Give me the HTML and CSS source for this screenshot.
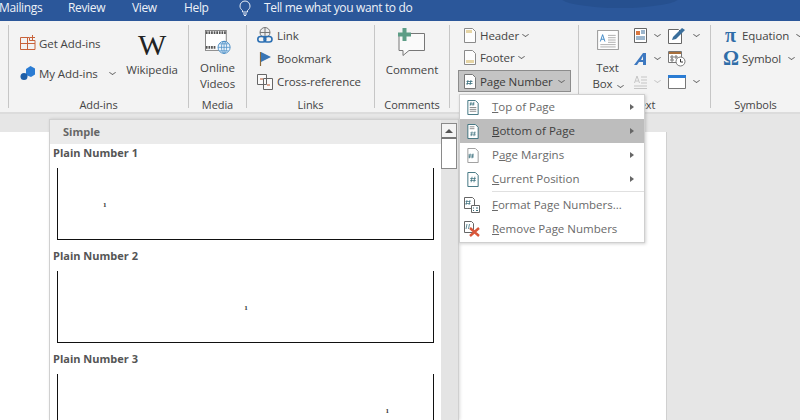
FILE: index.html
```html
<!DOCTYPE html>
<html lang="en">
<head>
<meta charset="utf-8">
<title>Page Number</title>
<link rel="stylesheet" href="styles.css">
</head>
<body>
<header class="titlebar">
  <div class="swoosh"></div>
  <nav class="tabs">
    <span class="tab tab-mailings">Mailings</span>
    <span class="tab tab-review">Review</span>
    <span class="tab tab-view">View</span>
    <span class="tab tab-help">Help</span>
    <svg class="bulb" width="14" height="16" viewBox="0 0 14 16" fill="none" stroke="#e8eef7" stroke-width="1"><path d="M4.5 10.5C3 9.3 2 8 2 6a5 5 0 0 1 10 0c0 2-1 3.3-2.500 4.500V12h-5zM5 14h4M6 15.500h2"/></svg>
    <span class="tab">Tell me what you want to do</span>
  </nav>
</header>

<section class="ribbon">
  <div class="group g-addins">
    <div class="body addins-body">
      <div class="col addins-left">
        <div class="cmd">
          <svg width="16" height="16" viewBox="0 0 16 16" fill="none" stroke="#c8623a"><path d="M.5 2.500h9v3h5.500v9H.5zM.5 8.500H15M7.500 2.500v12M12.500 0v5M10 2.500h5"/></svg>
          <span>Get Add-ins</span>
        </div>
        <div class="cmd">
          <svg width="16" height="16" viewBox="0 0 16 16"><path fill="#2b7cd3" d="M6 4l4.500-3L15 3.500v6L11 12l-5-2z"/><circle cx="4" cy="11.500" r="3.500" fill="#1e5fa8"/></svg>
          <span>My Add-ins</span><i class="chev chev-add"></i>
        </div>
      </div>
      <div class="col wiki">
        <span class="wiki-w">W</span>
        <span>Wikipedia</span>
      </div>
    </div>
    <div class="label">Add-ins</div>
  </div>

  <div class="group g-media">
    <div class="body big">
      <svg width="30" height="30" viewBox="0 0 30 30" fill="none"><rect x=".5" y=".5" width="24" height="23" fill="#fff" stroke="#777"/><path d="M1 3h23M1 20h12" stroke="#555" stroke-width="3" stroke-dasharray="2 1"/><circle cx="22" cy="20" r="7" fill="#eaf3fb" stroke="#3f87c2"/><path d="M15 20h14M22 13v14M17 16h10M17 24h10" stroke="#3f87c2" stroke-width=".8"/><ellipse cx="22" cy="20" rx="3" ry="7" stroke="#3f87c2" stroke-width=".8"/></svg>
      <span class="big-text media-text">Online<br>Videos</span>
    </div>
    <div class="label">Media</div>
  </div>

  <div class="group g-links">
    <div class="body col links-body">
      <div class="cmd">
        <svg width="16" height="17" viewBox="0 0 16 17" fill="none"><circle cx="8" cy="5.500" r="5" fill="#eee" stroke="#777"/><path d="M3 5.500h10M8 .5v10" stroke="#777"/><rect x=".8" y="9.500" width="8" height="5.500" rx="2.700" stroke="#2b6fb3" stroke-width="1.600"/><rect x="7" y="9.500" width="8" height="5.500" rx="2.700" stroke="#2b6fb3" stroke-width="1.600"/></svg>
        <span>Link</span>
      </div>
      <div class="cmd">
        <svg width="16" height="16" viewBox="0 0 16 16"><path d="M3.500 1v14" stroke="#8a6a3c" stroke-width="1.200"/><path d="M4 1l10 5-10 5z" fill="#3a76b5"/></svg>
        <span>Bookmark</span>
      </div>
      <div class="cmd">
        <svg width="16" height="17" viewBox="0 0 16 17" fill="#fafafa" stroke="#666"><path d="M.5 1.500h9v10h-9zM6.500 5.500h9v11h-9z"/><path d="M3 6h3M10 12h3" stroke="#b5552d"/></svg>
        <span>Cross-reference</span>
      </div>
    </div>
    <div class="label">Links</div>
  </div>

  <div class="group g-comments">
    <div class="body big">
      <svg width="32" height="29" viewBox="0 0 32 29" fill="none"><path d="M3 6.500h25.500v17H13l-6 5v-5H3z" transform="translate(0 -1)" fill="#fafafa" stroke="#777"/><path d="M6.500 0h4v4.500H15v4h-4.500V13h-4V8.500H2v-4h4.500z" fill="#5d9d86"/></svg>
      <span class="big-text comment-text">Comment</span>
    </div>
    <div class="label">Comments</div>
  </div>

  <div class="group g-header">
    <div class="body col header-body">
      <div class="cmd">
        <svg width="12" height="15" viewBox="0 0 12 15" fill="#fdfdfd" stroke="#8a8a8a"><path d="M.5.500h8l3 3v11H.5z"/><path d="M2 2h6v3H2z" fill="#e6d5a5" stroke="none"/></svg>
        <span>Header</span><i class="chev"></i>
      </div>
      <div class="cmd">
        <svg width="12" height="15" viewBox="0 0 12 15" fill="#fdfdfd" stroke="#8a8a8a"><path d="M.5.500h8l3 3v11H.5z"/><path d="M2 10h8v3H2z" fill="#e6d5a5" stroke="none"/></svg>
        <span>Footer</span><i class="chev"></i>
      </div>
      <div class="cmd pressed">
        <svg width="12" height="15" viewBox="0 0 12 15" fill="#fdfdfd" stroke="#777"><path d="M.5.500h8l3 3v11H.5z"/><path d="M4 6l-1 5M7 6l-1 5M2.500 7.500h6M2.500 9.500h6" stroke="#3a6f7c" stroke-width=".8" fill="none"/></svg>
        <span>Page Number</span><i class="chev"></i>
      </div>
    </div>
    <div class="label"></div>
  </div>

  <div class="group g-text">
    <div class="body text-body">
      <div class="big textbox">
        <svg width="28" height="26" viewBox="0 0 28 26" fill="#fff" stroke="#777"><path d="M.5.500h27v25H.5z"/><path d="M14 7h10M14 10h10M14 13h10M14 16h10M4 19h20M4 22h20" stroke="#999" fill="none"/><path d="M4 15l3-9 3 9M5 12h4" stroke="#3a86c4" stroke-width="1.200" fill="none"/></svg>
        <span class="big-text">Text<br>Box<i class="chev chev-box"></i></span>
      </div>
      <div class="icon-grid">
        <div class="icon-cell">
          <svg width="13" height="15" viewBox="0 0 13 15" fill="#fff" stroke="#666"><path d="M.5.500h12v14H.5z"/><path d="M2 3h4v4H2z" fill="#d9773f" stroke="none"/><path d="M7 3h4M7 5h4M2 9h9M2 11h9" stroke="#3a6f9c"/></svg><i class="chev"></i>
        </div>
        <div class="icon-cell">
          <svg width="18" height="17" viewBox="0 0 18 17" fill="#fff" stroke="#666"><path d="M.5 2.500h10l3 3v11H.5z"/><path d="M4 13l1-3 9-9 3 2-9 9z" fill="#3a6f9c" stroke="none"/></svg><i class="chev"></i>
        </div>
        <div class="icon-cell">
          <svg width="13" height="14" viewBox="0 0 13 14"><path d="M0 13L9 1h3v12H9v-3H5l-2 3zM9 4L7 8h2z" fill="#3d78c0"/></svg><i class="chev"></i>
        </div>
        <div class="icon-cell">
          <svg width="18" height="17" viewBox="0 0 18 17" fill="#fff" stroke="#777"><path d="M.5 1.500h13v11H.5z"/><path d="M1 2h12v2H1z" fill="#a8703c" stroke="none"/><path d="M3 6h2v2H3zM7 6h2v2H7zM3 9h2v2H3z"/><circle cx="12.500" cy="11.500" r="4.500"/><path d="M12.500 9v3h2.500" stroke="#333"/></svg>
        </div>
        <div class="icon-cell muted-icon">
          <svg width="13" height="15" viewBox="0 0 13 15" fill="none" stroke="#c5c5c5"><path d="M.5 9L3 2l2.500 7M1.500 7h3M7 3h6M7 6h6M7 9h6M0 12h13M0 14.500h13"/></svg><i class="chev chev-off"></i>
        </div>
        <div class="icon-cell">
          <svg width="18" height="14" viewBox="0 0 18 14" fill="#fff" stroke="#777"><path d="M.5.500h17v13H.5z"/><path d="M0 0h18v3H0z" fill="#2b7cd3" stroke="none"/></svg><i class="chev"></i>
        </div>
      </div>
    </div>
    <div class="label"><span class="text-label">Text</span></div>
  </div>

  <div class="group g-symbols">
    <div class="body col symbols-body">
      <div class="cmd sym"><span class="glyph">π</span><span>Equation</span><i class="chev"></i></div>
      <div class="cmd sym"><span class="glyph">Ω</span><span>Symbol</span><i class="chev"></i></div>
    </div>
    <div class="label">Symbols</div>
  </div>
</section>

<main class="docarea">
  <div class="page"></div>
</main>

<aside class="gallery">
  <div class="gallery-main">
    <div class="gallery-head">Simple</div>
    <div class="item">
      <div class="item-name">Plain Number 1</div>
      <div class="preview preview-left"><span class="num">1</span></div>
    </div>
    <div class="item">
      <div class="item-name">Plain Number 2</div>
      <div class="preview preview-center"><span class="num">1</span></div>
    </div>
    <div class="item">
      <div class="item-name">Plain Number 3</div>
      <div class="preview preview-right"><span class="num">1</span></div>
    </div>
  </div>
  <div class="scrollbar">
    <div class="scroll-up"><i class="tri-up"></i></div>
    <div class="scroll-thumb"></div>
  </div>
</aside>

<div class="menu">
  <div class="mi">
    <svg width="14" height="15" viewBox="0 0 14 16" fill="#fff" stroke="#3a6f7c"><path d="M1.500.500h8l3 3v12h-11z"/><path d="M5 2l-1 4M8 2L7 6M3.500 3.500h5M3.500 5h5" stroke-width=".7"/><path d="M3.500 8h7M3.500 10h7M3.500 12h7" stroke="#888"/></svg>
    <span class="mt"><u>T</u>op of Page</span><i class="arrow"></i>
  </div>
  <div class="mi active">
    <svg width="14" height="15" viewBox="0 0 14 16" fill="#fff" stroke="#3a6f7c"><path d="M1.500.500h8l3 3v12h-11z"/><path d="M3.500 3h5M3.500 5h5" stroke="#888"/><path d="M6 8l-1 5M9 8l-1 5M4 9.500h6M4 11.500h6" stroke-width=".7"/></svg>
    <span class="mt"><u>B</u>ottom of Page</span><i class="arrow"></i>
  </div>
  <div class="mi">
    <svg width="14" height="15" viewBox="0 0 14 16" fill="#fff" stroke="#3a6f7c"><path d="M1.500.500h8l3 3v12h-11z" stroke="#999"/><path d="M4 6l-1 5M7 6l-1 5M2 7.500h6M2 9.500h6" stroke-width=".8"/></svg>
    <span class="mt">P<u>a</u>ge Margins</span><i class="arrow"></i>
  </div>
  <div class="mi">
    <svg width="14" height="15" viewBox="0 0 14 16" fill="#fff" stroke="#3a6f7c"><path d="M1.500.500h8l3 3v12h-11z"/><path d="M6 5l-1 6M9 5l-1 6M4 7h6M4 9h6" stroke-width=".8"/></svg>
    <span class="mt"><u>C</u>urrent Position</span><i class="arrow"></i>
  </div>
  <div class="sep"></div>
  <div class="mi">
    <svg class="wide" width="16" height="16" viewBox="0 0 16 16" fill="#fff" stroke="#666"><path d="M.5.500h8l2 2v9H.5z"/><path d="M3 3L2 8M6 3L5 8M1.500 4.500h5M1.500 6.500h5" stroke="#3a6f7c" stroke-width=".7"/><path d="M7.500 8.500h8v7h-8z"/><path d="M9 11h1M12 11h2M9 13.500h1M12 13.500h2" stroke="#3a6f7c"/></svg>
    <span class="mt"><u>F</u>ormat Page Numbers...</span>
  </div>
  <div class="mi">
    <svg class="wide" width="16" height="16" viewBox="0 0 16 16" fill="none"><path d="M.5.500h7l2 2v9H.5z" fill="#fff" stroke="#666"/><path d="M3 3L2 8M5.500 3L4.500 8" stroke="#3a6f7c" stroke-width=".8"/><path d="M6 7l9 8M15 7l-9 8" stroke="#d9573a" stroke-width="2.400"/></svg>
    <span class="mt"><u>R</u>emove Page Numbers</span>
  </div>
</div>
</body>
</html>
```
FILE: styles.css
```css
* { box-sizing: border-box; }
html, body { margin: 0; height: 420px; overflow: hidden; }
body {
  width: 800px;
  position: relative;
  font-family: "Open Sans", "Noto Sans", sans-serif;
  font-size: 11.500px;
  color: #444;
  background: #e6e6e6;
  display: flex;
  flex-direction: column;
}
i { display: inline-block; font-style: normal; }

.titlebar {
  height: 21px;
  flex: none;
  background: #2b579a;
  position: relative;
  overflow: hidden;
}
.swoosh {
  position: absolute;
  left: 560px;
  top: -14px;
  width: 120px;
  height: 22px;
  border-radius: 50%;
  background: #26508f;
}
.tabs {
  position: relative;
  display: flex;
  align-items: center;
  height: 15px;
  margin-left: -1px;
  color: #eef2f8;
  font-size: 12px;
  letter-spacing: -.35px;
}
.tab { white-space: nowrap; }
.tab-mailings { width: 69px; }
.tab-review { width: 64px; }
.tab-view { width: 52px; }
.tab-help { width: 54px; }
.bulb { margin-right: 12px; flex: none; }

.ribbon {
  height: 93px;
  flex: none;
  background: #f3f3f3;
  border-bottom: 2px solid #dcdcdc;
  padding: 4px 0 4px 8px;
  display: flex;
  letter-spacing: -.08px;
}
.group {
  border-left: 1px solid #c6c6c6;
  display: flex;
  flex-direction: column;
  flex: none;
}
.group .body { flex: 1; min-height: 0; }
.label {
  height: 16px;
  line-height: 25px;
  text-align: center;
  font-size: 11px;
  white-space: nowrap;
}
.g-addins { width: 180px; }
.g-media { width: 58px; }
.g-links { width: 128px; }
.g-comments { width: 75px; }
.g-header { width: 129px; }
.g-text { width: 132px; }
.g-symbols { width: 90px; }

.col { display: flex; flex-direction: column; }
.cmd {
  display: flex;
  align-items: center;
  white-space: nowrap;
  gap: 4px;
}
.cmd svg { flex: none; }
.chev {
  width: 5px;
  height: 5px;
  border-right: 1px solid #666;
  border-bottom: 1px solid #666;
  transform: scaleY(.7) rotate(45deg);
  margin: -2px 0 0 4px;
  flex: none;
}

.addins-body { display: flex; }
.addins-left { padding: 10px 0 0 11px; gap: 14px; width: 122px; }
.addins-left .cmd { height: 16px; gap: 3px; }
.chev-add { margin-left: 9px; }
.wiki { align-items: center; width: 60px; margin-left: -9px; padding-top: 6px; }
.wiki-w {
  font-family: "Liberation Serif", serif;
  font-size: 30px;
  line-height: 28px;
  color: #222;
  margin-bottom: 3px;
}

.big {
  display: flex;
  flex-direction: column;
  align-items: center;
  padding-top: 5px;
}
.big-text { text-align: center; line-height: 16px; margin-top: 3px; white-space: nowrap; }
.media-text { margin-top: 4px; }
.comment-text { margin-top: 5px; }
.g-comments .big { padding-top: 3px; }

.links-body { padding: 2px 0 0 10px; gap: 6px; }
.links-body .cmd { height: 17px; }

.header-body { padding: 3px 0 0 8px; gap: 6px; }
.header-body .cmd { height: 17px; padding-left: 6px; }
.header-body .chev { margin-left: 0; }
.header-body .cmd.pressed {
  height: 24px;
  width: 113px;
  margin-top: -2px;
  background: #c4c4c4;
  border: 1px solid #8c8c8c;
  padding-left: 5px;
  padding-top: 1px;
  color: #3a3a3a;
}
.header-body .pressed .chev { margin-left: 2px; }

.text-body { display: flex; }
.textbox { width: 56px; padding: 5px 0 0 1px; }
.textbox .big-text { margin-top: 10px; }
.chev-box { margin-left: 5px; }
.icon-grid {
  display: grid;
  grid-template-columns: 34px 40px;
  grid-auto-rows: 23px;
  align-items: center;
  align-self: flex-start;
  margin: -1px 0 0 -1px;
}
.icon-cell { display: flex; align-items: center; }
.icon-cell .chev { margin-left: 8px; }
.chev-off { border-color: #c5c5c5; }

.symbols-body { padding: 2px 0 0 12px; gap: 6px; }
.sym { height: 17px; gap: 4px; }
.glyph {
  font-family: "Liberation Serif", serif;
  font-size: 20px;
  font-weight: 700;
  line-height: 17px;
  color: #2f6da8;
  width: 15px;
  flex: none;
  text-align: center;
}

.docarea { flex: 1; padding-top: 18px; }
.page { width: 667px; height: 100%; background: #fff; border-right: 1px solid #d0d0d0; }

.gallery {
  position: absolute;
  left: 49px;
  top: 119px;
  width: 410px;
  height: 301px;
  background: #fff;
  border: 1px solid #d0d0d0;
  border-bottom: 0;
  box-shadow: 1px 0 3px rgba(0,0,0,.15);
  display: flex;
  overflow: hidden;
}
.gallery-main { flex: 1; min-width: 0; }
.gallery-head {
  height: 24px;
  line-height: 24px;
  padding-left: 13px;
  background: #ebebeb;
  font-weight: 700;
  font-size: 11px;
  color: #666;
}
.item { height: 103px; padding-left: 3px; }
.item-name {
  height: 24px;
  line-height: 18px;
  font-weight: 700;
  font-size: 11px;
  color: #555;
}
.preview {
  width: 377px;
  height: 72px;
  margin-left: 4px;
  border-left: 1.500px solid #111;
  border-right: 1.500px solid #111;
  border-bottom: 1.500px solid #111;
  display: flex;
  align-items: center;
  padding: 3px 44px 0 45px;
  font-size: 7px;
  font-weight: 700;
  color: #333;
}
.preview-left { justify-content: flex-start; }
.preview-center { justify-content: center; }
.preview-right { justify-content: flex-end; }
.num { font-family: "Liberation Serif", serif; }
.scrollbar {
  width: 17px;
  flex: none;
  background: #e4e4e4;
  padding: 3px 1px 0 0;
  display: flex;
  flex-direction: column;
}
.scroll-up {
  height: 16px;
  background: #f4f4f4;
  border: 1px solid #8a8a8a;
  border-bottom: 2px solid #777;
  display: flex;
  align-items: center;
  justify-content: center;
}
.tri-up {
  width: 0;
  height: 0;
  border-left: 4px solid transparent;
  border-right: 4px solid transparent;
  border-bottom: 4px solid #555;
}
.scroll-thumb {
  height: 30px;
  background: #fff;
  border: 1px solid #8a8a8a;
  border-top: 0;
}

.menu {
  position: absolute;
  left: 459px;
  top: 94px;
  width: 186px;
  height: 149px;
  background: #fff;
  border: 1px solid #cfcfcf;
  box-shadow: 1px 1px 3px rgba(0,0,0,.18);
  color: #6a6a6a;
}
.mi {
  height: 24px;
  display: flex;
  align-items: center;
  padding-left: 6px;
  white-space: nowrap;
}
.mi svg { flex: none; width: 14px; }
.mi svg.wide { width: 16px; margin-left: -2px; }
.mt { margin-left: 12px; flex: 1; padding-bottom: 2px; }
.mi.active { background: #bdbdbd; color: #3f3f3f; }
.arrow {
  width: 0;
  height: 0;
  border-top: 3.500px solid transparent;
  border-bottom: 3.500px solid transparent;
  border-left: 4px solid #666;
  margin-right: 10px;
}
.sep { height: 1px; background: #e0e0e0; margin: 0 0 1px 32px; }
```
